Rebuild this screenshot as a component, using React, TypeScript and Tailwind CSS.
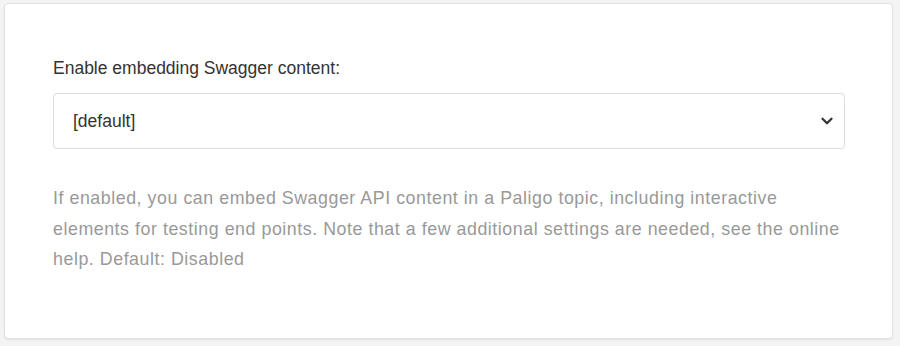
import { ChevronDown } from "lucide-react";

export default function App() {
  return (
    <div className="min-h-[346px] w-[900px] bg-[#f4f4f4] pl-[4px] pt-[3px] font-['Liberation_Sans',Arial,sans-serif]">
      <div className="h-[336px] w-[889px] rounded-[4px] border border-[#e2e2e2] bg-white pl-[48px] pr-[47px] pt-[52px] shadow-[0_1px_2px_rgba(0,0,0,0.08)]">
        <label className="block text-[17.5px] leading-[24px] text-[#333333]">
          Enable embedding Swagger content:
        </label>
        <div className="mt-[13px] flex h-[56px] items-center justify-between rounded-[4px] border border-[#dcdcdc] bg-white pl-[19px] pr-[8px]">
          <span className="text-[17.5px] text-[#333333]">[default]</span>
          <ChevronDown className="h-[18px] w-[18px] text-[#333333]" strokeWidth={3} />
        </div>
        <p className="mt-[34px] text-[17.8px] leading-[30.5px] tracking-[0.55px] text-[#999999]">
          If enabled, you can embed Swagger API content in a Paligo topic, including interactive
          elements for testing end points. Note that a few additional settings are needed, see the
          online help. Default: Disabled
        </p>
      </div>
    </div>
  );
}
